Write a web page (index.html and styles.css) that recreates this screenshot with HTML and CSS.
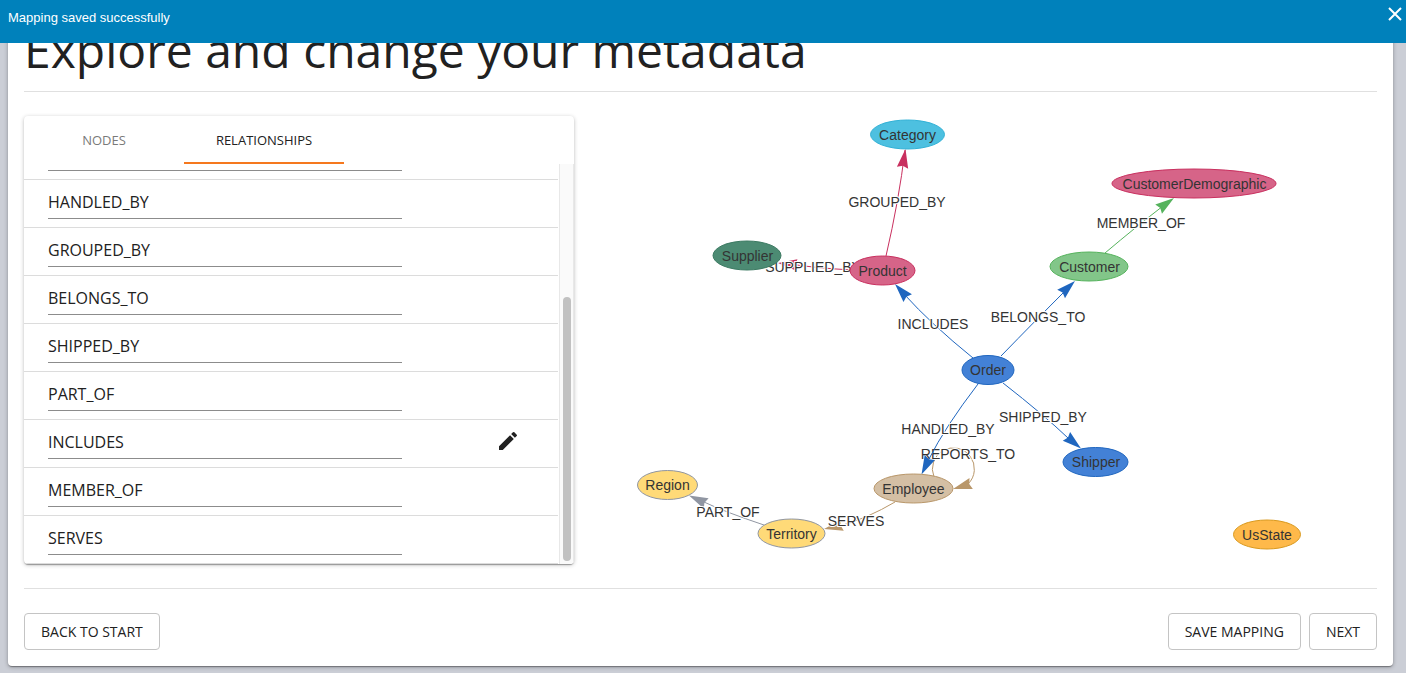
FILE: index.html
```html
<!DOCTYPE html>
<html lang="en">
<head>
<meta charset="utf-8">
<title>Explore and change your metadata</title>
<link rel="stylesheet" href="styles.css">
</head>
<body>
<div class="toast" role="status">
  <span>Mapping saved successfully</span>
  <button class="toast-close" type="button" aria-label="Close">
    <svg width="14" height="14" viewBox="0 0 14 14"><path d="M1 1 13 13M13 1 1 13" fill="none" stroke="#fff" stroke-width="2"/></svg>
  </button>
</div>
<main class="page">
  <h1 class="title">Explore and change your metadata</h1>
  <hr class="rule">
  <div class="workspace">
    <section class="panel">
      <div class="tabs" role="tablist">
        <button class="tab" type="button" role="tab" aria-selected="false">NODES</button>
        <button class="tab tab-active" type="button" role="tab" aria-selected="true">RELATIONSHIPS</button>
      </div>
      <div class="list">
        <ul class="rows">
          <li class="row"><input class="name" aria-label="Relationship name" value="REPORTS_TO"></li>
          <li class="row"><input class="name" aria-label="Relationship name" value="HANDLED_BY"></li>
          <li class="row"><input class="name" aria-label="Relationship name" value="GROUPED_BY"></li>
          <li class="row"><input class="name" aria-label="Relationship name" value="BELONGS_TO"></li>
          <li class="row"><input class="name" aria-label="Relationship name" value="SHIPPED_BY"></li>
          <li class="row"><input class="name" aria-label="Relationship name" value="PART_OF"></li>
          <li class="row"><input class="name" aria-label="Relationship name" value="INCLUDES">
            <button class="edit" type="button" aria-label="Edit INCLUDES">
              <svg width="24" height="24" viewBox="0 0 24 24"><path fill="#212121" d="M3 17.25V21h3.75L17.81 9.94l-3.75-3.75L3 17.25zM20.71 7.04a1 1 0 0 0 0-1.41l-2.34-2.34a1 1 0 0 0-1.41 0l-1.83 1.83 3.75 3.75 1.83-1.83z"/></svg>
            </button></li>
          <li class="row"><input class="name" aria-label="Relationship name" value="MEMBER_OF"></li>
          <li class="row"><input class="name" aria-label="Relationship name" value="SERVES"></li>
        </ul>
        <div class="track"><div class="thumb"></div></div>
      </div>
    </section>
    <svg class="graph" viewBox="590 116 787 448" role="img" aria-label="Metadata graph">
      <defs><path id="head" d="M0 0-19 5.7-17 0-19-5.7z"/></defs>
      <g class="edge crimson"><path class="line" d="M886 256Q899 200 905 150"/><use href="#head" transform="translate(905.5 149) rotate(-81)"/><text x="897" y="207">GROUPED_BY</text></g>
      <g class="edge crimson"><path class="line" d="M852 270Q815 268 790 264"/><use href="#head" transform="translate(778 263) rotate(186)"/><text x="813" y="272">SUPPLIED_BY</text></g>
      <g class="edge green"><path class="line" d="M1105 253Q1137 226 1163 206"/><use href="#head" transform="translate(1174 198) rotate(-36)"/><text x="1141" y="228">MEMBER_OF</text></g>
      <g class="edge tan"><path class="line" d="M934 477A21 21 0 1 1 968 484"/><use href="#head" transform="translate(953 489) rotate(163)"/><text x="968" y="459">REPORTS_TO</text></g>
      <g class="edge blue"><path class="line" d="M973 358Q931 324 904 294"/><use href="#head" transform="translate(895 284) rotate(228)"/><text x="933" y="329">INCLUDES</text></g>
      <g class="edge blue"><path class="line" d="M1001 356Q1036 320 1065 291"/><use href="#head" transform="translate(1075 281) rotate(-43)"/><text x="1038" y="322">BELONGS_TO</text></g>
      <g class="edge blue"><path class="line" d="M978 384Q945 427 929 459"/><use href="#head" transform="translate(921.5 474.5) rotate(116)"/><text x="948" y="434">HANDLED_BY</text></g>
      <g class="edge blue"><path class="line" d="M1003 383Q1044 415 1068 438"/><use href="#head" transform="translate(1081 448.5) rotate(40)"/><text x="1043" y="422">SHIPPED_BY</text></g>
      <g class="edge slate"><path class="line" d="M764 525Q725 512 704 502"/><use href="#head" transform="translate(689 495.5) rotate(205)"/><text x="728" y="517">PART_OF</text></g>
      <g class="edge tan"><path class="line" d="M895 502Q868 518 840 526"/><use href="#head" transform="translate(824 529) rotate(168)"/><text x="856" y="526">SERVES</text></g>

      <g class="node cyan"><ellipse cx="907.5" cy="134.5" rx="37" ry="14.5"/><text x="907.5" y="140">Category</text></g>
      <g class="node teal"><ellipse cx="747" cy="255.5" rx="34" ry="14.5"/><text x="747.5" y="261">Supplier</text></g>
      <g class="node pink"><ellipse cx="882.5" cy="270.5" rx="32.5" ry="14.5"/><text x="882.5" y="276">Product</text></g>
      <g class="node pink"><ellipse cx="1194" cy="183.5" rx="82" ry="14.5"/><text x="1194.5" y="189">CustomerDemographic</text></g>
      <g class="node lime"><ellipse cx="1089" cy="266.5" rx="39" ry="14.5"/><text x="1089.5" y="272">Customer</text></g>
      <g class="node royal"><ellipse cx="988" cy="370" rx="26" ry="14.5"/><text x="988" y="375">Order</text></g>
      <g class="node royal"><ellipse cx="1095.5" cy="462" rx="32.5" ry="14.5"/><text x="1096" y="467">Shipper</text></g>
      <g class="node sand"><ellipse cx="913.5" cy="488.5" rx="39.5" ry="14.5"/><text x="913.5" y="494">Employee</text></g>
      <g class="node yellow"><ellipse cx="667.5" cy="485" rx="30" ry="14.5"/><text x="667.5" y="490">Region</text></g>
      <g class="node yellow"><ellipse cx="791.5" cy="533.5" rx="33.5" ry="14.5"/><text x="791.5" y="539">Territory</text></g>
      <g class="node orange"><ellipse cx="1267" cy="534.5" rx="33.5" ry="14.5"/><text x="1267" y="540">UsState</text></g>
    </svg>
  </div>
  <hr class="rule">
  <div class="actions">
    <button class="btn" type="button">BACK TO START</button>
    <div class="actions-end">
      <button class="btn" type="button">SAVE MAPPING</button>
      <button class="btn" type="button">NEXT</button>
    </div>
  </div>
</main>
</body>
</html>
```
FILE: styles.css
```css
* { box-sizing: border-box; }
body {
  margin: 0;
  padding: 0 13px 7px 8px;
  background: #cbced6;
  color: #212121;
  font-family: "Open Sans", "Noto Sans", sans-serif;
}
button { font-family: inherit; background: none; border: 0; padding: 0; cursor: pointer; }

.toast {
  position: fixed;
  top: 0;
  left: 0;
  right: 0;
  z-index: 10;
  display: flex;
  justify-content: space-between;
  align-items: flex-start;
  height: 43px;
  padding: 7px 4px 0 8px;
  background: #0081bb;
  color: #fff;
  font: 13px/22px "Liberation Sans", Arial, sans-serif;
}
.toast-close { display: flex; }

.page {
  padding: 22px 16px 16px;
  background: #fff;
  border-radius: 4px;
  box-shadow: 0 2px 1px -1px rgba(0,0,0,.2), 0 1px 1px rgba(0,0,0,.14), 0 1px 4px rgba(0,0,0,.3);
}
.title { margin: 0 0 13px; font-size: 48px; font-weight: 400; line-height: 56px; }
.rule { height: 1px; margin: 0; border: 0; background: #e0e0e0; }
.workspace {
  display: grid;
  grid-template-columns: minmax(320px, 550px) minmax(0, 1fr);
  gap: 16px;
  margin: 24px 0;
}

.panel {
  overflow: hidden;
  border-radius: 4px;
  background: #fff;
  box-shadow: 0 2px 1px -1px rgba(0,0,0,.2), 0 1px 1px rgba(0,0,0,.14), 0 1px 4px rgba(0,0,0,.24);
}
.tabs { display: flex; }
.tab { width: 160px; height: 48px; padding-top: 2px; border-bottom: 2px solid transparent; color: #7a7a7a; font-size: 13px; }
.tab-active { border-color: #f5781e; color: #212121; }
.list { display: flex; height: 400px; }
.rows {
  flex: 1;
  display: flex;
  flex-direction: column;
  justify-content: flex-end;
  margin: 0;
  padding: 0;
  overflow: hidden;
  list-style: none;
}
.row {
  flex: none;
  display: flex;
  align-items: center;
  justify-content: space-between;
  height: 48px;
  padding: 0 38px 0 24px;
  border-bottom: 1px solid #dcdcdc;
}
.name {
  width: 354px;
  height: 31px;
  padding: 0 0 2px;
  border: 0;
  border-bottom: 1px solid #8c8c8c;
  border-radius: 0;
  background: none;
  color: #212121;
  font: 16px/24px "Open Sans", "Noto Sans", sans-serif;
}
.edit { display: flex; padding-bottom: 6px; }
.track {
  display: flex;
  align-items: flex-end;
  width: 15px;
  margin-left: 1px;
  padding: 0 2px 3px 3px;
  border: solid #e8e8e8;
  border-width: 0 1px;
  background: #fafafa;
}
.thumb { width: 8px; height: 264px; border-radius: 4px; background: #c1c1c1; }

.graph { width: 100%; height: 100%; font: 14px "Liberation Sans", Arial, sans-serif; }
.graph text { fill: #343434; text-anchor: middle; }
.edge text { stroke: #fff; stroke-width: 2px; paint-order: stroke; }
.line { fill: none; stroke-width: 1px; }
.crimson { fill: #c9305f; stroke: #c9305f; }
.green { fill: #56b35d; stroke: #56b35d; }
.blue { fill: #1f66bf; stroke: #1f66bf; }
.tan { fill: #b9976a; stroke: #b9976a; }
.slate { fill: #9096a2; stroke: #9096a2; }
.edge use { stroke: none; }
.cyan ellipse { fill: #4dc0e0; stroke: #32b1d6; }
.teal ellipse { fill: #4c8b73; stroke: #3c7a62; }
.pink ellipse { fill: #d66488; stroke: #c9305f; }
.lime ellipse { fill: #82c689; stroke: #56b35d; }
.royal ellipse { fill: #4381d6; stroke: #1f66bf; }
.sand ellipse { fill: #d4bfa4; stroke: #b9976a; }
.yellow ellipse { fill: #ffda78; stroke: #9096a2; }
.orange ellipse { fill: #feb94a; stroke: #d99a20; }

.actions { display: flex; justify-content: space-between; padding-top: 24px; }
.actions-end { display: flex; gap: 8px; }
.btn {
  height: 37px;
  padding: 0 16px;
  border: 1px solid #c4c4c4;
  border-radius: 4px;
  color: #212121;
  font-size: 14px;
}
```
